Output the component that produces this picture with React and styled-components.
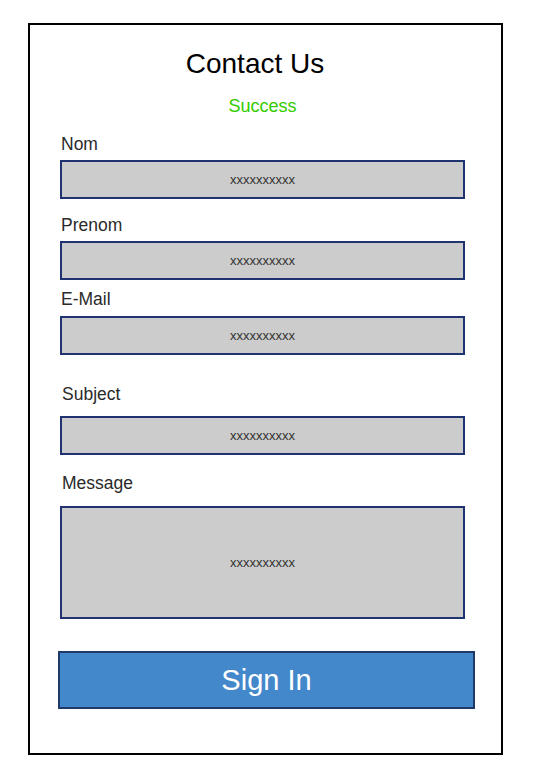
import React from "react"
import styled, { createGlobalStyle } from "styled-components"

const GlobalStyle = createGlobalStyle`
  body {
    margin: 0;
    background: #ffffff;
    font-family: "Liberation Sans", Arial, sans-serif;
  }
`

const Card = styled.form`
  box-sizing: border-box;
  width: 475px;
  height: 732px;
  margin: 23px 0 0 28px;
  padding: 0 0 0 30px;
  border: 2px solid #000000;
  display: flex;
  flex-direction: column;
`

const Title = styled.h1`
  margin: 22px 0 0;
  padding-right: 51px;
  font-size: 28px;
  line-height: 34px;
  font-weight: 400;
  color: #000000;
  text-align: center;
`

const Status = styled.div`
  margin-top: 14px;
  width: 405px;
  font-size: 18px;
  line-height: 22px;
  color: #33cc00;
  text-align: center;
`

const Field = styled.div`
  display: flex;
  flex-direction: column;
  margin-top: ${({ top }) => top}px;
`

const Label = styled.label`
  margin-left: ${({ shift }) => (shift ? shift : 1)}px;
  margin-bottom: ${({ gap }) => gap}px;
  font-size: 17.5px;
  line-height: 20px;
  color: #2a2a2a;
`

const Input = styled.input`
  box-sizing: border-box;
  width: 405px;
  height: ${({ tall }) => (tall ? 113 : 39)}px;
  margin: 0;
  padding: 0;
  border: 2px solid #1f3370;
  background: #cccccc;
  font-family: "Liberation Sans", Arial, sans-serif;
  font-size: 13px;
  color: #333333;
  text-align: center;
  outline: none;

  &::placeholder {
    color: #333333;
    opacity: 1;
  }
`

const Button = styled.button`
  box-sizing: border-box;
  width: 417px;
  height: 58px;
  margin: 32px 0 0 -2px;
  border: 2px solid #1f3a68;
  background: #4488cc;
  color: #ffffff;
  font-family: "Liberation Sans", Arial, sans-serif;
  font-size: 29px;
  cursor: pointer;
`

const fields = [
  { label: "Nom", top: 17, gap: 6 },
  { label: "Prenom", top: 16, gap: 6 },
  { label: "E-Mail", top: 9, gap: 7 },
  { label: "Subject", top: 29, gap: 12, shift: 2 },
  { label: "Message", top: 18, gap: 13, shift: 2, tall: true },
]

export default function App() {
  return (
    <>
      <GlobalStyle />
      <Card onSubmit={(e) => e.preventDefault()}>
        <Title>Contact Us</Title>
        <Status>Success</Status>
        {fields.map((f) => (
          <Field key={f.label} top={f.top}>
            <Label gap={f.gap} shift={f.shift}>
              {f.label}
            </Label>
            <Input tall={f.tall} placeholder="xxxxxxxxxx" />
          </Field>
        ))}
        <Button type="submit">Sign In</Button>
      </Card>
    </>
  )
}
